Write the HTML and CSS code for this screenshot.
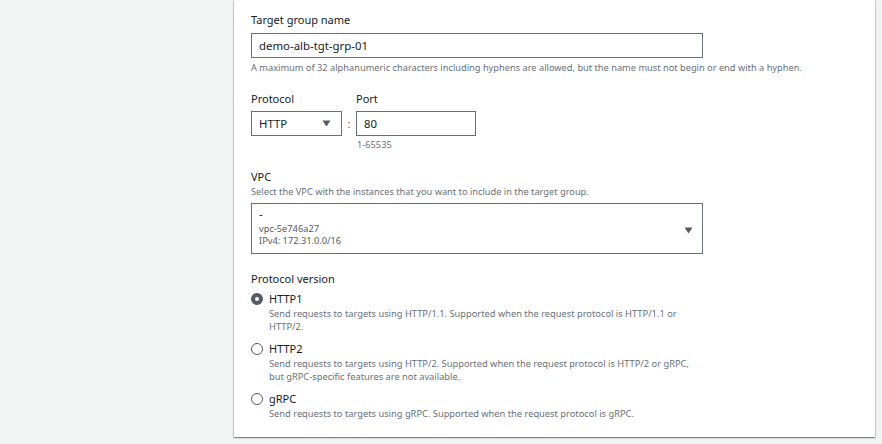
FILE: index.html
```html
<!DOCTYPE html>
<html>
<head>
<meta charset="utf-8">
<link rel="stylesheet" href="styles.css">
</head>
<body>
<div class="page">
  <div class="card">
    <div class="field first">
      <div class="label">Target group name</div>
      <div class="input wide">demo-alb-tgt-grp-01</div>
      <div class="hint">A maximum of 32 alphanumeric characters including hyphens are allowed, but the name must not begin or end with a hyphen.</div>
    </div>

    <div class="field proto">
      <div class="proto-col">
        <div class="label">Protocol</div>
        <div class="select small">
          <span>HTTP</span>
          <svg class="caret" width="9" height="7" viewBox="0 0 9 7"><path d="M0.5 0.5 H8.5 L4.5 6.5 Z" fill="#545b64"/></svg>
        </div>
      </div>
      <div class="colon">:</div>
      <div class="port-col">
        <div class="label">Port</div>
        <div class="input port">80</div>
        <div class="hint range">1-65535</div>
      </div>
    </div>

    <div class="field vpc">
      <div class="label">VPC</div>
      <div class="desc">Select the VPC with the instances that you want to include in the target group.</div>
      <div class="select vpcbox">
        <div class="vpc-lines">
          <div class="vpc-name">-</div>
          <div class="vpc-sub first-sub">vpc-5e746a27</div>
          <div class="vpc-sub">IPv4: 172.31.0.0/16</div>
        </div>
        <svg class="caret" width="9" height="7" viewBox="0 0 9 7"><path d="M0.5 0.5 H8.5 L4.5 6.5 Z" fill="#545b64"/></svg>
      </div>
    </div>

    <div class="field version">
      <div class="label">Protocol version</div>
      <div class="radio-item">
        <div class="radio-row"><span class="radio checked"></span><span class="radio-label">HTTP1</span></div>
        <div class="radio-desc">Send requests to targets using HTTP/1.1. Supported when the request protocol is HTTP/1.1 or<br>HTTP/2.</div>
      </div>
      <div class="radio-item">
        <div class="radio-row"><span class="radio"></span><span class="radio-label">HTTP2</span></div>
        <div class="radio-desc">Send requests to targets using HTTP/2. Supported when the request protocol is HTTP/2 or gRPC,<br>but gRPC-specific features are not available.</div>
      </div>
      <div class="radio-item">
        <div class="radio-row"><span class="radio"></span><span class="radio-label">gRPC</span></div>
        <div class="radio-desc">Send requests to targets using gRPC. Supported when the request protocol is gRPC.</div>
      </div>
    </div>
  </div>
</div>
</body>
</html>
```

FILE: styles.css
```css
html, body {
  margin: 0;
  padding: 0;
  background: #f2f3f3;
  font-family: "Noto Sans", "Open Sans", sans-serif;
  color: #16191f;
}

.page {
  width: 882px;
  height: 444px;
  overflow: hidden;
  padding-left: 234px;
  box-sizing: border-box;
}

.card {
  width: 641px;
  box-sizing: border-box;
  background: #fff;
  padding: 0 20px 17px 17px;
  box-shadow: 0 1px 1px 0 rgba(0, 28, 36, 0.3), 1px 1px 1px 0 rgba(0, 28, 36, 0.15), -1px 1px 1px 0 rgba(0, 28, 36, 0.15);
}

.field {
  display: flex;
  flex-direction: column;
}

.first { padding-top: 12px; }

.label {
  font-size: 11px;
  line-height: 16px;
  color: #16191f;
}

.input, .select {
  box-sizing: border-box;
  border: 1px solid #687078;
  background: #fff;
  font-size: 11.4px;
  color: #16191f;
  display: flex;
  align-items: center;
}

.input {
  height: 25px;
  padding-left: 7px;
  margin-top: 5px;
}

.wide { width: 452px; }

.hint {
  font-size: 9.25px;
  line-height: 14px;
  color: #687078;
  margin-top: 3px;
}

.proto {
  flex-direction: row;
  align-items: flex-start;
  margin-top: 16px;
}

.proto-col, .port-col {
  display: flex;
  flex-direction: column;
}

.select.small {
  width: 91px;
  height: 25px;
  margin-top: 4px;
  padding: 0 10px 0 7px;
  justify-content: space-between;
}

.colon {
  font-size: 11px;
  color: #545b64;
  width: 14px;
  text-align: center;
  margin-top: 20px;
  line-height: 25px;
}

.input.port {
  width: 120px;
  margin-top: 4px;
}

.hint.range { margin-top: 2px; padding-left: 1px; }

.vpc { margin-top: 17px; }

.desc {
  font-size: 9.25px;
  line-height: 14px;
  color: #687078;
}

.vpcbox {
  width: 452px;
  height: 51px;
  margin-top: 4px;
  padding: 3px 9px 0 7px;
  justify-content: space-between;
  align-items: flex-start;
}

.vpcbox .caret { margin-top: 20px; }

.vpc-lines {
  display: flex;
  flex-direction: column;
}

.vpc-name {
  font-size: 11.4px;
  line-height: 13px;
  color: #16191f;
}

.vpc-sub {
  font-size: 9.25px;
  line-height: 12px;
  color: #545b64;
}

.first-sub { margin-top: 3px; }

.version { margin-top: 17px; }

.radio-item {
  display: flex;
  flex-direction: column;
  margin-top: 4px;
}

.radio-item + .radio-item { margin-top: 8px; }

.radio-row {
  display: flex;
  align-items: center;
  height: 16px;
}

.radio {
  width: 12px;
  height: 12px;
  box-sizing: border-box;
  border-radius: 50%;
  border: 1px solid #545b64;
  background: #fff;
  margin-right: 6px;
}

.radio.checked {
  border: 4px solid #545b64;
}

.radio-label {
  font-size: 11px;
  line-height: 16px;
}

.radio-desc {
  font-size: 9.3px;
  line-height: 13px;
  color: #687078;
  padding-left: 18px;
}
```
